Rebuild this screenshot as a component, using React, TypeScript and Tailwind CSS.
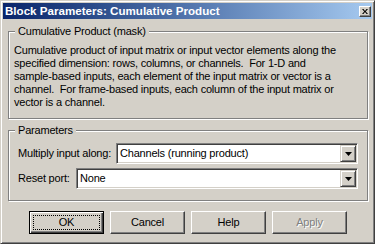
const font = { fontFamily: '"Liberation Sans", Arial, sans-serif' };

const desc = [
  'Cumulative product of input matrix or input vector elements along the',
  'specified dimension: rows, columns, or channels.  For 1-D and',
  'sample-based inputs, each element of the input matrix or vector is a',
  'channel.  For frame-based inputs, each column of the input matrix or',
  'vector is a channel.',
];

function Combo({ value }: { value: string }) {
  return (
    <div className="flex-1 flex h-[21px] bg-white border border-t-[#808080] border-l-[#808080] border-b-white border-r-white shadow-[inset_1px_1px_0_#404040,inset_-1px_-1px_0_#d4d0c8] p-[1px]">
      <span className="flex-1 flex items-center pl-[2px] text-[11px] leading-none whitespace-nowrap">{value}</span>
      <div className="w-[16px] flex items-center justify-center bg-[#d4d0c8] border border-t-[#d4d0c8] border-l-[#d4d0c8] border-b-[#404040] border-r-[#404040] shadow-[inset_1px_1px_0_white,inset_-1px_-1px_0_#808080]">
        <svg width="7" height="4" viewBox="0 0 7 4">
          <path d="M0 0h7L3.5 4z" fill="black" />
        </svg>
      </div>
    </div>
  );
}

function Button({ label, primary, disabled }: { label: string; primary?: boolean; disabled?: boolean }) {
  if (primary) {
    return (
      <div className="w-[75px] h-[23px] flex border border-black bg-[#d4d0c8] shadow-[inset_1px_1px_0_white,inset_-1px_-1px_0_#404040,inset_-2px_-2px_0_#808080] p-[3px]">
        <div className="flex-1 flex items-center justify-center border border-dotted border-black text-[11px] leading-none">{label}</div>
      </div>
    );
  }
  return (
    <div className="w-[75px] h-[23px] flex items-center justify-center border border-t-white border-l-white border-b-[#404040] border-r-[#404040] bg-[#d4d0c8] shadow-[inset_-1px_-1px_0_#808080] text-[11px] leading-none">
      <span className={disabled ? 'text-[#808080] [text-shadow:1px_1px_0_white]' : ''}>{label}</span>
    </div>
  );
}

function Group({ title, className, children }: { title: string; className: string; children: React.ReactNode }) {
  return (
    <div className={`relative border border-[#808080] shadow-[inset_1px_1px_0_white,1px_1px_0_white] ${className}`}>
      <span className="absolute -top-[8px] left-[6px] bg-[#d4d0c8] px-[3px] text-[11px] leading-[14px]">{title}</span>
      {children}
    </div>
  );
}

export default function App() {
  return (
    <div className="w-[375px] h-[244px] flex flex-col bg-[#d4d0c8] border border-t-[#d4d0c8] border-l-[#d4d0c8] border-b-[#404040] border-r-[#404040] shadow-[inset_1px_1px_0_white,inset_-1px_-1px_0_#808080] p-[2px] text-black tracking-[-0.2px]" style={font}>
      <div className="h-[16px] flex items-center justify-between pl-[2px] pr-[1px] bg-gradient-to-r from-[#0a246a] to-[#a6caf0]">
        <span className="text-white font-bold text-[11.6px] leading-none whitespace-nowrap tracking-normal">Block Parameters: Cumulative Product</span>
        <div className="w-[12px] h-[11px] flex items-center justify-center bg-[#d4d0c8] border border-t-white border-l-white border-b-[#404040] border-r-[#404040] shadow-[inset_-1px_-1px_0_#808080]">
          <svg width="6" height="5" viewBox="0 0 6 5">
            <path d="M0 0h1.5L3 2l1.5-2H6L3.8 2.5 6 5H4.5L3 3 1.5 5H0l2.2-2.5z" fill="black" />
          </svg>
        </div>
      </div>

      <div className="flex flex-col pl-[5px] pr-[4px]">
        <Group title="Cumulative Product (mask)" className="mt-[12px] h-[88px] pt-[12px] pl-[5px]">
          {desc.map((line, i) => (
            <div key={i} className="text-[11px] leading-[13px] whitespace-pre">{line}</div>
          ))}
        </Group>

        <Group title="Parameters" className="mt-[11px] h-[71px] pt-[12px] px-[9px]">
          <div className="flex items-center">
            <span className="w-[98px] text-[11px] whitespace-nowrap">Multiply input along:</span>
            <Combo value="Channels (running product)" />
          </div>
          <div className="flex items-center mt-[4px]">
            <span className="w-[58px] text-[11px] whitespace-nowrap">Reset port:</span>
            <Combo value="None" />
          </div>
        </Group>
      </div>

      <div className="flex gap-[6px] mt-[10px] pl-[26px]">
        <Button label="OK" primary />
        <Button label="Cancel" />
        <Button label="Help" />
        <Button label="Apply" disabled />
      </div>
    </div>
  );
}
